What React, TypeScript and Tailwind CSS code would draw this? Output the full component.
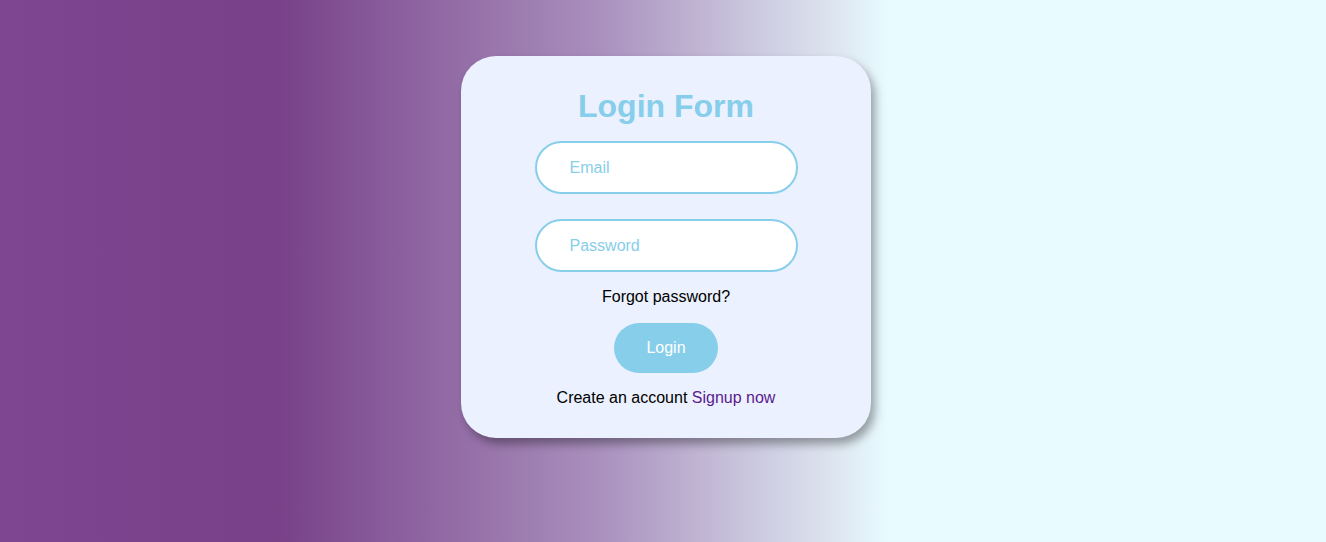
import React from 'react';

export default function App() {
  return (
    <div className="min-h-[542px] w-full bg-[linear-gradient(to_right,#7e4590_0%,#784189_21%,#a98fbd_45%,#dde6f0_63%,#e8fbff_67%,#e8fbff_100%)] flex justify-center pt-[56px] pl-[6px] font-['Liberation_Sans',Arial,sans-serif]">
      <div className="w-[410px] h-[382px] rounded-[35px] bg-[#ebf1fe] shadow-[4px_6px_10px_rgba(0,0,0,0.35)] flex flex-col items-center pt-[32px]">
        <h1 className="text-[32px] leading-[37px] font-bold text-[#87ceeb]">Login Form</h1>
        <input
          type="email"
          placeholder="Email"
          className="mt-[16px] w-[263px] h-[53px] rounded-full border-2 border-[#87ceeb] bg-white pl-[33px] text-base text-[#87ceeb] placeholder:text-[#87ceeb] outline-none"
        />
        <input
          type="password"
          placeholder="Password"
          className="mt-[25px] w-[263px] h-[53px] rounded-full border-2 border-[#87ceeb] bg-white pl-[33px] text-base text-[#87ceeb] placeholder:text-[#87ceeb] outline-none"
        />
        <a className="mt-[16px] text-base leading-[18px] text-black">Forgot password?</a>
        <button className="mt-[17px] w-[104px] h-[50px] rounded-full bg-[#87ceeb] text-white text-base">Login</button>
        <p className="mt-[16px] text-base leading-[18px] text-black">
          Create an account <a className="text-[#5b1a8f]">Signup now</a>
        </p>
      </div>
    </div>
  );
}
